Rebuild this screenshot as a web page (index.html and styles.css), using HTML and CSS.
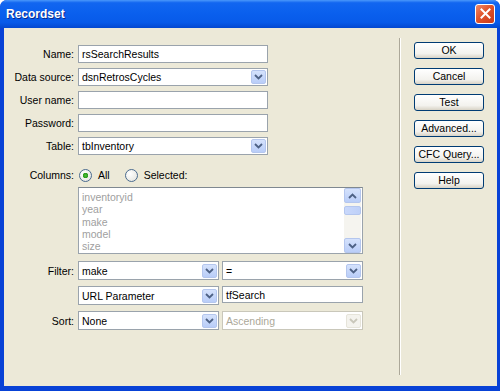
FILE: index.html
```html
<!DOCTYPE html>
<html lang="en">

<head>
    <meta charset="UTF-8">
    <meta name="viewport" content="width=device-width, initial-scale=1.0">
    <title>Recordset</title>
    <link rel="stylesheet" href="styles.css">
</head>

<body>
    <div class="window">
        <div class="titlebar">
            <span class="title">Recordset</span>
            <span class="close">
                <svg width="11" height="11" viewBox="0 0 11 11"><path d="M1.5 1.5 L9.5 9.5 M9.5 1.5 L1.5 9.5" stroke="#fff" stroke-width="2" stroke-linecap="square" /></svg>
            </span>
        </div>
        <div class="body">
            <div class="form">
                <div class="row">
                    <span class="label">Name:</span>
                    <div class="input wide">rsSearchResults</div>
                </div>
                <div class="row">
                    <span class="label">Data source:</span>
                    <div class="select wide"><span class="value">dsnRetrosCycles</span><span class="arrow"><svg width="9" height="6" viewBox="0 0 9 6"><path d="M1 1 L4.5 4.5 L8 1" /></svg></span></div>
                </div>
                <div class="row">
                    <span class="label">User name:</span>
                    <div class="input wide"></div>
                </div>
                <div class="row">
                    <span class="label">Password:</span>
                    <div class="input wide"></div>
                </div>
                <div class="row">
                    <span class="label">Table:</span>
                    <div class="select wide"><span class="value">tbInventory</span><span class="arrow"><svg width="9" height="6" viewBox="0 0 9 6"><path d="M1 1 L4.5 4.5 L8 1" /></svg></span></div>
                </div>
                <div class="row columns">
                    <span class="label">Columns:</span>
                    <div class="radios">
                        <span class="radio checked"></span><span>All</span>
                        <span class="radio"></span><span>Selected:</span>
                    </div>
                </div>
                <div class="row list-row">
                    <span class="label"></span>
                    <div class="listbox">
                        <ul class="items">
                            <li>inventoryid</li>
                            <li>year</li>
                            <li>make</li>
                            <li>model</li>
                            <li>size</li>
                        </ul>
                        <div class="scrollbar">
                            <span class="sb-btn"><svg width="9" height="6" viewBox="0 0 9 6"><path d="M1 5 L4.5 1.5 L8 5" /></svg></span>
                            <div class="sb-track"><span class="sb-thumb"></span></div>
                            <span class="sb-btn"><svg width="9" height="6" viewBox="0 0 9 6"><path d="M1 1 L4.5 4.5 L8 1" /></svg></span>
                        </div>
                    </div>
                </div>
                <div class="row filter">
                    <span class="label">Filter:</span>
                    <div class="pair">
                        <div class="select half"><span class="value">make</span><span class="arrow"><svg width="9" height="6" viewBox="0 0 9 6"><path d="M1 1 L4.5 4.5 L8 1" /></svg></span></div>
                        <div class="select half"><span class="value">=</span><span class="arrow"><svg width="9" height="6" viewBox="0 0 9 6"><path d="M1 1 L4.5 4.5 L8 1" /></svg></span></div>
                    </div>
                </div>
                <div class="row sub">
                    <span class="label"></span>
                    <div class="pair">
                        <div class="select half"><span class="value">URL Parameter</span><span class="arrow"><svg width="9" height="6" viewBox="0 0 9 6"><path d="M1 1 L4.5 4.5 L8 1" /></svg></span></div>
                        <div class="input half short">tfSearch</div>
                    </div>
                </div>
                <div class="row sub">
                    <span class="label">Sort:</span>
                    <div class="pair">
                        <div class="select half"><span class="value">None</span><span class="arrow"><svg width="9" height="6" viewBox="0 0 9 6"><path d="M1 1 L4.5 4.5 L8 1" /></svg></span></div>
                        <div class="select half disabled"><span class="value">Ascending</span><span class="arrow"><svg width="9" height="6" viewBox="0 0 9 6"><path d="M1 1 L4.5 4.5 L8 1" /></svg></span></div>
                    </div>
                </div>
            </div>
            <div class="separator"></div>
            <div class="buttons">
                <div class="button">OK</div>
                <div class="button">Cancel</div>
                <div class="button">Test</div>
                <div class="button">Advanced...</div>
                <div class="button">CFC Query...</div>
                <div class="button">Help</div>
            </div>
        </div>
    </div>
</body>

</html>
```

FILE: styles.css
```css
* {
    margin: 0;
    padding: 0;
    box-sizing: border-box;
}

body {
    background: #fff;
    font-family: "Liberation Sans", Arial, sans-serif;
    font-size: 10.5px;
    color: #000;
}

.window {
    display: flex;
    flex-direction: column;
    width: 500px;
    height: 391px;
    background: #0842d6;
    border-radius: 7px 7px 0 0;
    overflow: hidden;
}

/* 标题栏 */
.titlebar {
    display: flex;
    align-items: center;
    justify-content: space-between;
    height: 28px;
    padding: 0 5px 1px 6px;
    background: linear-gradient(#4a98fb 0%, #1266f0 10%, #0a60ee 45%, #075ae9 80%, #0348d0 100%);
}

.title {
    color: #fff;
    font-size: 12px;
    font-weight: bold;
    text-shadow: 1px 1px 0 #0a2a8a;
}

.close {
    display: flex;
    align-items: center;
    justify-content: center;
    width: 20px;
    height: 20px;
    border: 1px solid #fff;
    border-radius: 3px;
    background: linear-gradient(135deg, #f08a6a 0%, #e0542c 45%, #c8391a 100%);
}

.body {
    flex: 1;
    display: flex;
    margin: 0 3px 5px 4px;
    background: #ece9d8;
}

/* 左侧表单 */
.form {
    display: flex;
    flex-direction: column;
    width: 359px;
    padding-top: 17px;
}

.row {
    display: flex;
    align-items: center;
    gap: 4px;
    margin-bottom: 5px;
}

.label {
    width: 70px;
    flex-shrink: 0;
    text-align: right;
}

.input,
.select {
    display: flex;
    align-items: center;
    height: 18px;
    padding-left: 3px;
    background: #fff;
    border: 1px solid #9aa3ac;
}

.wide {
    width: 190px;
}

.half {
    width: 141px;
}

.short {
    height: 17px;
    align-self: flex-start;
}

.select {
    justify-content: space-between;
    padding-right: 1px;
}

.select .arrow {
    display: flex;
    align-items: center;
    justify-content: center;
    width: 15px;
    height: 14px;
    border: 1px solid #b4c6ee;
    border-radius: 2px;
    background: linear-gradient(#d5e2fc, #b9cdf8);
}

.arrow path,
.sb-btn path {
    fill: none;
    stroke: #4d6185;
    stroke-width: 1.8;
}

.select.disabled {
    color: #aca899;
    border-color: #c9c7ba;
}

.select.disabled .arrow {
    border-color: #e6e4da;
    background: #f4f3ee;
}

.select.disabled path {
    stroke: #c9c7ba;
}

.columns {
    height: 16px;
    margin-top: 7px;
    margin-bottom: 4px;
}

.radios {
    display: flex;
    align-items: center;
}

.radio {
    width: 13px;
    height: 13px;
    margin: 0 6px 0 1px;
    border: 1px solid #4a6b8f;
    border-radius: 50%;
    background: radial-gradient(circle at 35% 35%, #fff, #e2e1da);
}

.radio.checked {
    background: radial-gradient(circle, #4dbf3a 0, #2a9a1a 2.5px, transparent 3px), radial-gradient(circle at 35% 35%, #fff, #e2e1da);
}

.radios span:nth-child(2) {
    margin-right: 14px;
}

.list-row {
    margin-bottom: 7px;
}

.listbox {
    display: flex;
    width: 285px;
    height: 67px;
    background: #fff;
    border: 1px solid #9aa3ac;
    border-top-color: #7f8890;
}

.items {
    flex: 1;
    list-style: none;
    padding: 3px 3px;
    color: #a0a0a0;
    line-height: 12.3px;
}

.scrollbar {
    display: flex;
    flex-direction: column;
    width: 17px;
    margin-right: 1px;
    background: #f5f4ef;
}

.sb-btn {
    display: flex;
    align-items: center;
    justify-content: center;
    height: 15px;
    border: 1px solid #b4c6ee;
    border-radius: 2px;
    background: linear-gradient(#d5e2fc, #b9cdf8);
}

.sb-track {
    flex: 1;
    padding-top: 3px;
}

.sb-thumb {
    display: block;
    height: 9px;
    border: 1px solid #b4c6ee;
    border-radius: 2px;
    background: linear-gradient(90deg, #c9d8fb, #bed0f8);
}

.filter,
.sub {
    height: 19px;
    margin-bottom: 6px;
}

.filter .select,
.sub .select {
    height: 19px;
}

.pair {
    display: flex;
    gap: 3px;
}

/* 分隔线 */
.separator {
    width: 2px;
    margin: 10px 0 11px 36px;
    border-left: 1px solid #aca899;
    border-right: 1px solid #fff;
}

/* 右侧按钮 */
.buttons {
    display: flex;
    flex-direction: column;
    gap: 9px;
    padding-top: 14px;
    margin-left: 13px;
}

.button {
    width: 70px;
    height: 17px;
    line-height: 15px;
    text-align: center;
    border: 1px solid #003c74;
    border-radius: 3px;
    background: linear-gradient(#fff, #f3f2ee 70%, #d8d3c6);
}
```
